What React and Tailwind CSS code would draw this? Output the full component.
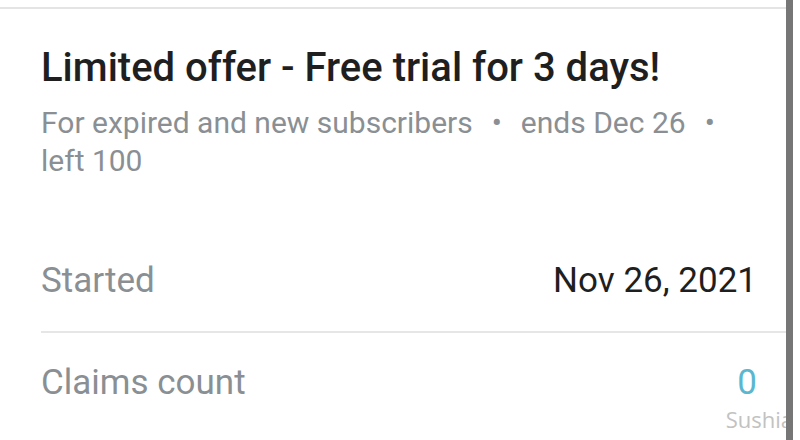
import React from 'react';

const Row = ({ label, value, valueClass, className = '' }) => (
  <div className={`flex items-start justify-between pr-[29px] ${className}`}>
    <span className="text-[35px] leading-[40px] text-[#8a8f94]">{label}</span>
    <span className={`text-[35px] leading-[40px] ${valueClass}`}>{value}</span>
  </div>
);

const App = () => {
  return (
    <div className="relative h-[440px] w-[800px] overflow-hidden bg-white pr-[7px] font-['Roboto',sans-serif]">
      <div className="flex h-full w-[793px] flex-col border-r-[7px] border-[#767676]">
        <div className="mt-[7px] h-[2px] bg-[#e4e4e4]" />

        <div className="pl-[41px] pt-[36px]">
          <h1 className="whitespace-nowrap text-[40px] font-medium leading-[46px] text-[#1f1f1f]">
            Limited offer - Free trial for 3 days!
          </h1>
          <p className="mt-[13px] text-[30px] leading-[38px] text-[#8a8f94]">
            <span className="whitespace-nowrap">
              For expired and new subscribers
              <span className="mx-[19px]">•</span>
              ends Dec 26
              <span className="mx-[19px]">•</span>
            </span>
            <br />
            left 100
          </p>
        </div>

        <div className="pl-[41px] pt-[81px]">
          <Row
            label="Started"
            value="Nov 26, 2021"
            valueClass="text-[#1f1f1f]"
            className="border-b-2 border-[#e6e6e6] pb-[30px]"
          />
          <Row
            label="Claims count"
            value="0"
            valueClass="text-[#5bb7cf]"
            className="pt-[30px]"
          />
        </div>

        <div className="mt-auto mb-[6px] flex justify-end overflow-hidden pr-0">
          <span className="-mr-[7px] font-['Open_Sans',sans-serif] text-[22px] leading-[30px] text-[#c2c2c2]">
            Sushia
          </span>
        </div>
      </div>
    </div>
  );
};

export default App;
